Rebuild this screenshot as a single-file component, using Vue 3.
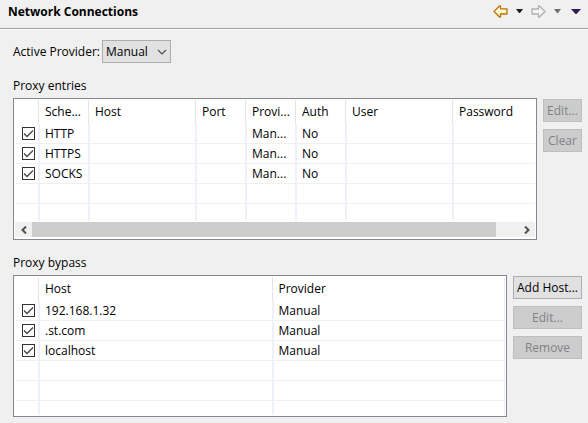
<script setup>
import { ref } from 'vue'

const provider = ref('Manual')
const entries = ref([
  { on: true, scheme: 'HTTP', provider: 'Man...', auth: 'No' },
  { on: true, scheme: 'HTTPS', provider: 'Man...', auth: 'No' },
  { on: true, scheme: 'SOCKS', provider: 'Man...', auth: 'No' },
])
const bypass = ref([
  { on: true, host: '192.168.1.32', provider: 'Manual' },
  { on: true, host: '.st.com', provider: 'Manual' },
  { on: true, host: 'localhost', provider: 'Manual' },
])
</script>

<template>
  <main class="page">
    <header class="title-bar">
      <h1>Network Connections</h1>
      <nav class="tools" aria-label="History">
        <button class="tool arrow" aria-label="Back">
          <svg width="15" height="13" viewBox="0 0 15 13">
            <path d="M1 6.500 6.500 1h1v3h6.500v5h-6.500v3h-1Z" fill="#fff3bd" stroke="#b87410" stroke-width="1.300" stroke-linejoin="round" />
            <path d="M3 6.500 6.400 3v2.200h6" fill="none" stroke="#fffbe6" />
          </svg>
        </button>
        <button class="tool menu" aria-label="Back history">
          <svg width="7" height="4" viewBox="0 0 7 4"><path d="M0 0h7L4 4H3Z" fill="#1e1e1e" /></svg>
        </button>
        <button class="tool arrow" aria-label="Forward">
          <svg width="15" height="13" viewBox="0 0 15 13">
            <path d="M14 6.500 8.500 1h-1v3h-6.500v5h6.500v3h1Z" fill="#f4f4f4" stroke="#b0b0b0" stroke-width="1.300" stroke-linejoin="round" />
          </svg>
        </button>
        <button class="tool menu" aria-label="Forward history">
          <svg width="7" height="4" viewBox="0 0 7 4"><path d="M0 0h7L4 4H3Z" fill="#6e6e6e" /></svg>
        </button>
        <button class="tool view" aria-label="View menu">
          <svg width="10" height="5" viewBox="0 0 10 5"><path d="M0 0h10L5.500 5h-1Z" fill="#2c1c50" /></svg>
        </button>
      </nav>
    </header>

    <div class="content">
      <div class="provider">
        <label for="provider">Active Provider:</label>
        <div class="combo">
          <select id="provider" v-model="provider">
            <option>Manual</option>
            <option>Direct</option>
            <option>Native</option>
          </select>
          <svg width="10" height="6" viewBox="0 0 10 6"><path d="M1 1l4 4 4-4" fill="none" stroke="#505050" stroke-width="1.200" /></svg>
        </div>
      </div>

      <h2 id="entries-title">Proxy entries</h2>
      <section class="group">
        <div class="frame">
          <div class="view-port">
            <table aria-labelledby="entries-title">
              <colgroup>
                <col class="c-check" /><col class="c-small" /><col class="c-wide" /><col class="c-small" />
                <col class="c-small" /><col class="c-small" /><col class="c-wide" /><col />
              </colgroup>
              <thead>
                <tr>
                  <th></th><th>Sche...</th><th>Host</th><th>Port</th><th>Provi...</th><th>Auth</th><th>User</th><th>Password</th>
                </tr>
              </thead>
              <tbody>
                <tr v-for="e in entries" :key="e.scheme">
                  <td>
                    <span class="check">
                      <input v-model="e.on" type="checkbox" :aria-label="e.scheme" />
                      <svg v-if="e.on" width="13" height="13" viewBox="0 0 13 13"><path d="M2 6.500 5 9.500l6-6" fill="none" stroke="#444" stroke-width="1.300" /></svg>
                    </span>
                  </td>
                  <td>{{ e.scheme }}</td><td></td><td></td><td>{{ e.provider }}</td><td>{{ e.auth }}</td><td></td><td></td>
                </tr>
                <tr v-for="n in 2" :key="n"><td v-for="c in 8" :key="c"></td></tr>
              </tbody>
            </table>
          </div>
          <div class="scroll">
            <button class="step" aria-label="Scroll left">
              <svg width="6" height="8" viewBox="0 0 6 8"><path d="M5 .5 1.500 4 5 7.500" fill="none" stroke="#505050" stroke-width="2" /></svg>
            </button>
            <div class="track"><div class="thumb"></div></div>
            <button class="step" aria-label="Scroll right">
              <svg width="6" height="8" viewBox="0 0 6 8"><path d="M1 .5 4.500 4 1 7.500" fill="none" stroke="#505050" stroke-width="2" /></svg>
            </button>
          </div>
        </div>
        <div class="actions narrow">
          <button class="btn" disabled>Edit...</button>
          <button class="btn" disabled>Clear</button>
        </div>
      </section>

      <h2 id="bypass-title">Proxy bypass</h2>
      <section class="group">
        <div class="frame">
          <div class="view-port tall">
            <table class="closed" aria-labelledby="bypass-title">
              <colgroup><col class="c-check" /><col /><col /></colgroup>
              <thead>
                <tr><th></th><th>Host</th><th>Provider</th></tr>
              </thead>
              <tbody>
                <tr v-for="b in bypass" :key="b.host">
                  <td>
                    <span class="check">
                      <input v-model="b.on" type="checkbox" :aria-label="b.host" />
                      <svg v-if="b.on" width="13" height="13" viewBox="0 0 13 13"><path d="M2 6.500 5 9.500l6-6" fill="none" stroke="#444" stroke-width="1.300" /></svg>
                    </span>
                  </td>
                  <td>{{ b.host }}</td><td>{{ b.provider }}</td>
                </tr>
                <tr v-for="n in 3" :key="n"><td v-for="c in 3" :key="c"></td></tr>
              </tbody>
            </table>
          </div>
        </div>
        <div class="actions wide">
          <button class="btn">Add Host...</button>
          <button class="btn" disabled>Edit...</button>
          <button class="btn" disabled>Remove</button>
        </div>
      </section>
    </div>
  </main>
</template>

<style>
body {
  background: #f0f0f0;
}
</style>

<style scoped>
.page,
.page button,
.page select {
  font-family: "Open Sans", "Noto Sans", sans-serif;
  font-size: 12px;
  line-height: 16px;
  color: #000;
}
.title-bar {
  display: flex;
  justify-content: space-between;
  height: 28px;
  padding: 0 7px 0 8px;
  border-bottom: 1px solid #a0a0a0;
  box-shadow: 0 1px #fff;
}
h1 {
  margin: 0;
  padding-top: 4px;
  font-size: 12px;
  font-weight: 700;
  line-height: 16px;
}
.tools {
  display: flex;
  align-items: center;
  height: 22px;
  gap: 8px;
}
.tool {
  display: flex;
  padding: 0;
  border: 0;
  background: none;
}
.view {
  margin-left: 2px;
}
.content {
  padding: 11px 6px 6px 13px;
}
.provider {
  display: flex;
  align-items: center;
  gap: 2px;
}
.combo {
  display: grid;
  align-items: center;
}
.combo > * {
  grid-area: 1 / 1;
}
.combo svg {
  justify-self: end;
  margin-right: 4px;
  pointer-events: none;
}
.combo select {
  appearance: none;
  width: 69px;
  height: 23px;
  padding: 0 3px;
  border: 1px solid #adadad;
  border-radius: 0;
  background: #e1e1e1;
}
h2 {
  margin: 0;
  padding: 15px 0 4px;
  font-size: 12px;
  font-weight: 400;
  line-height: 16px;
}
.group {
  display: flex;
  align-items: flex-start;
  gap: 6px;
}
.frame {
  flex: 1;
  min-width: 0;
  padding: 1px;
  border: 1px solid #828790;
  background: #fff;
}
.view-port {
  height: 121px;
  overflow: hidden;
}
.view-port.tall {
  height: 138px;
}
table {
  width: 100%;
  table-layout: fixed;
  border-collapse: separate;
  border-spacing: 0;
}
.c-check {
  width: 23px;
}
.c-small {
  width: 50px;
}
.c-wide {
  width: 107px;
}
th,
td {
  box-sizing: border-box;
  padding: 0 0 0 5px;
  overflow: hidden;
  font-weight: 400;
  text-align: left;
  white-space: nowrap;
}
th {
  height: 24px;
  padding-left: 6px;
  border-left: 1px solid #e5e5e5;
}
td {
  height: 20px;
  border-left: 2px solid #edf1fa;
  border-bottom: 1px solid #f0f0f0;
}
th:first-child,
td:first-child {
  border-left: 0;
  padding-left: 7px;
}
.closed th:last-child,
.closed td:last-child {
  border-right: 1px solid #e8edf8;
}
.check {
  display: grid;
  width: 13px;
  height: 13px;
}
.check > * {
  grid-area: 1 / 1;
}
.check svg {
  pointer-events: none;
}
.check input {
  appearance: none;
  box-sizing: border-box;
  width: 13px;
  height: 13px;
  margin: 0;
  border: 1px solid #333;
  background: #fff;
}
.scroll {
  display: flex;
  height: 15px;
  margin: 1px 0;
  background: #f0f0f0;
}
.step {
  display: grid;
  place-items: center;
  width: 17px;
  padding: 0;
  border: 0;
  background: none;
}
.track {
  flex: 1;
}
.thumb {
  width: 95.5%;
  height: 15px;
  background: #cdcdcd;
}
.actions {
  display: grid;
  gap: 7px;
  padding-top: 1px;
}
.narrow {
  width: 39px;
}
.wide {
  width: 69px;
}
.btn {
  height: 23px;
  padding: 0;
  border: 1px solid #adadad;
  background: #e1e1e1;
  white-space: nowrap;
}
.page .btn:disabled {
  border-color: #bfbfbf;
  background: #ccc;
  color: #838383;
}
</style>
